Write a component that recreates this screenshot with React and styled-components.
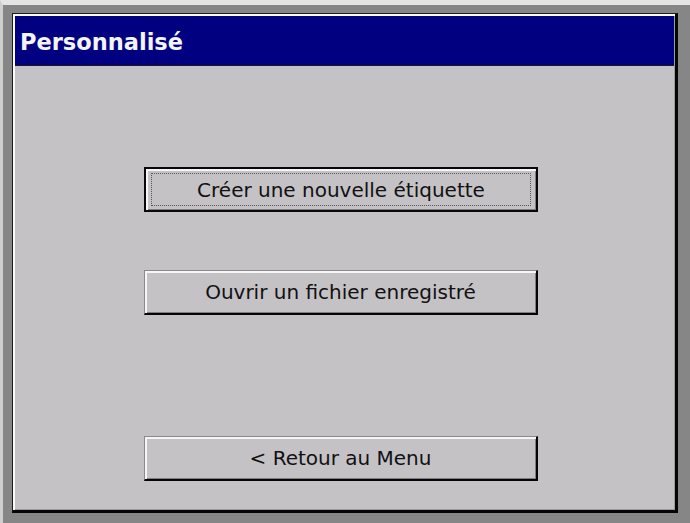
import React from 'react';
import styled, { createGlobalStyle } from 'styled-components';

const GlobalStyle = createGlobalStyle`
  html, body {
    margin: 0;
    padding: 0;
    background: #858585;
  }
  #root {
    width: 690px;
    height: 523px;
  }
`;

const Screen = styled.div`
  box-sizing: border-box;
  width: 690px;
  height: 523px;
  border-top: 5px solid #e4e4e4;
  border-left: 3px solid #cfcfcf;
  padding: 8px 0 0 9px;
  background: #868686;
`;

const Window = styled.div`
  box-sizing: border-box;
  width: 666px;
  height: 500px;
  display: flex;
  flex-direction: column;
  border-top: 1px solid #1c1c1c;
  border-left: 1px solid #1c1c1c;
  border-right: 3px solid #050505;
  border-bottom: 3px solid #050505;
  padding: 2px 1px 1px 2px;
  background: #c4c2c5;
  box-shadow: inset 2px 2px #fafafa, inset -1px -1px #9c9a9d;
`;

const TitleBar = styled.div`
  height: 50px;
  flex: none;
  box-sizing: border-box;
  display: flex;
  align-items: center;
  padding: 3px 0 0 5px;
  background: #000080;
  border-bottom: 1px solid #1a1a1a;
`;

const Title = styled.h1`
  margin: 0;
  font-family: "DejaVu Sans", Verdana, sans-serif;
  font-size: 22.5px;
  font-weight: bold;
  color: #f4f4f4;
`;

const Content = styled.div`
  flex: 1;
  display: flex;
  flex-direction: column;
  align-items: flex-start;
  padding: 101px 0 0 129px;
`;

const Button = styled.button`
  box-sizing: border-box;
  width: 394px;
  height: 45px;
  margin-bottom: ${p => p.$gap || 0}px;
  padding: 0;
  display: flex;
  align-items: center;
  justify-content: center;
  background: #c4c2c5;
  font-family: "DejaVu Sans", Verdana, sans-serif;
  font-size: 20px;
  color: #111;
  border-style: solid;
  border-width: ${p => (p.$default ? '2px' : '1px 2px 2px 1px')};
  border-color: ${p => (p.$default ? '#080808' : '#8a8a8a #050505 #050505 #8a8a8a')};
  box-shadow: inset 2px 2px #f6f6f6, inset -1px -1px #7e7e7e;
  cursor: default;
`;

const Focus = styled.span`
  flex: 1;
  align-self: stretch;
  margin: 4px 5px;
  display: flex;
  align-items: center;
  justify-content: center;
  border: 1px dotted #555;
`;

export default function App() {
  return (
    <>
      <GlobalStyle />
      <Screen>
        <Window>
          <TitleBar>
            <Title>Personnalisé</Title>
          </TitleBar>
          <Content>
            <Button $default $gap={58}>
              <Focus>Créer une nouvelle étiquette</Focus>
            </Button>
            <Button $gap={121}>Ouvrir un fichier enregistré</Button>
            <Button>&lt; Retour au Menu</Button>
          </Content>
        </Window>
      </Screen>
    </>
  );
}
